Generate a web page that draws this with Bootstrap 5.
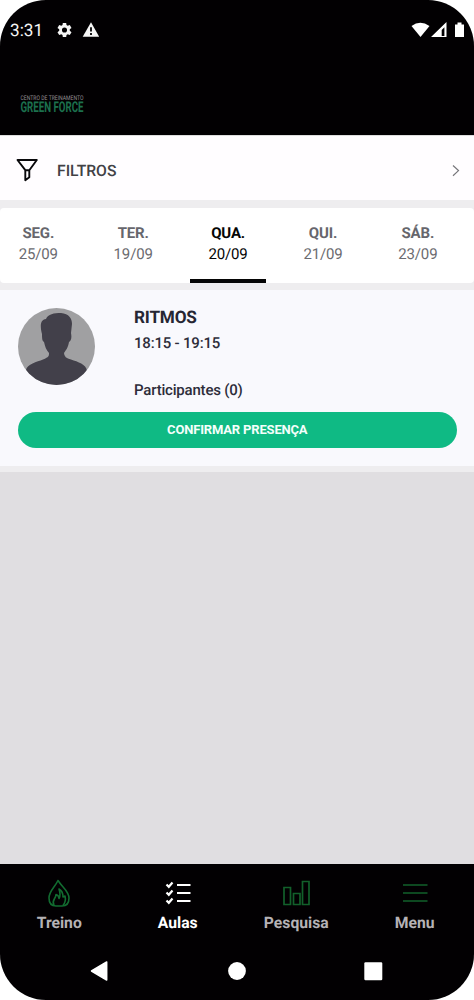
<!DOCTYPE html>
<html lang="pt-BR">
<head>
<meta charset="utf-8">
<meta name="viewport" content="width=device-width, initial-scale=1">
<title>Aulas</title>
<link href="https://cdn.jsdelivr.net/npm/bootstrap@5.3.0/dist/css/bootstrap.min.css" rel="stylesheet">
<style>
body{background:#fff;font-family:Roboto,"Liberation Sans",sans-serif;color:#2d2d3a;overflow:hidden;text-rendering:geometricPrecision}
svg{display:block}
.phone{width:474px;height:1000px;border-radius:46px;background:#e0dee1}
.topbar{height:135px;background:#020002}
.status{height:60px;padding-left:10px;padding-right:9px}
.clock{font-size:17.2px;line-height:20px;width:46px;padding-top:1px;color:#f4f4f4}
.logo{margin:26px 0 0 16px;overflow:visible}
.sheet{background:#eeedef}
.filters{height:65px;padding:5px 14px 0 16px;background:#fffdff;border-top:1px solid #ddd}
.filters span{font-size:15.7px;font-weight:500;color:#414145;margin-left:18px}
.days{height:75px;margin-top:8px;background:#fff;border-radius:4px}
.day{width:76.600px;margin-right:18.300px;padding-top:15px;text-align:center;color:#6b6b70;font-size:15px;letter-spacing:-.15px;line-height:21px;border-bottom:4px solid transparent}
.day b{display:block;font-size:15px;font-weight:700;color:#66666c}
.day.active,.day.active b{color:#050505}
.day.active{border-color:#050505}
.lesson{height:176px;margin-top:7px;padding:18px 17.5px 0 18px;background:#f9f9fd}
.lesson-text{height:100px;margin-left:39px;font-weight:500;font-size:15px;letter-spacing:-.2px;line-height:20px}
.lesson-text h1{font-size:17.2px;line-height:20px;margin:0 0 5px;font-weight:700;color:#262633}
.people{padding-top:27px}
.confirm{height:36px;margin-top:4px;background:#0fba84!important;border:0;border-radius:18px;color:#f5fffb!important;font-weight:700;font-size:13px;letter-spacing:-.17px;line-height:36px;padding:0}
.edge{height:6px}
.bottom{height:136px;background:#020002}
.tabs{height:80px}
.tab{width:118.8px;padding-top:14px;color:#b5b2b5;font-weight:700;font-size:15.7px;line-height:20px;text-decoration:none}
.tab svg{margin-bottom:4px}
.tab.active{color:#fff}
</style>
</head>
<body>
<div class="phone d-flex flex-column overflow-hidden">
  <header class="topbar flex-shrink-0">
    <div class="status d-flex align-items-center">
      <span class="clock">3:31</span>
      <svg width="17" height="18" viewBox="0 0 24 24" fill="#f5f5f5"><path fill-rule="evenodd" d="M19.4 13l.1-1-.1-1 2.5-2-2.4-4.2-3 1.2-1.7-1L14.4 2H9.6l-.4 3-1.7 1-3-1.2L2.100 9l2.500 2-.1 1 .1 1-2.500 2 2.400 4.200 3-1.200 1.700 1 .4 3h4.800l.4-3 1.700-1 3 1.200 2.400-4.200zM12 15.600a3.600 3.600 0 1 1 0-7.200 3.600 3.600 0 0 1 0 7.200z"/></svg>
      <svg class="ms-2" width="20" height="17" viewBox="0 0 20 17"><path fill="#f5f5f5" d="M10 .3 18.200 14.700H1.700z"/><path stroke="#020002" stroke-width="1.800" d="M10 5.300V9.500M10 11v1.900"/></svg>
      <svg class="ms-auto" width="54" height="18" viewBox="0 0 54 18" fill="#fff"><path d="M.5 5Q9.200-1.300 18.500 5L9.500 16z"/><path fill-rule="evenodd" d="M20 16 35.500 1v15zM30.700 9v6h2.700V6.300z"/><path d="M44 3.500h2.500V1.500h4v2H53V16h-9z"/></svg>
    </div>
    <svg class="logo" width="80" height="36" viewBox="-4 -6 80 36" font-family="Roboto, sans-serif">
      <text x=".5" y="7.600" font-size="6.300" textLength="63" lengthAdjust="spacingAndGlyphs" fill="#969096">CENTRO DE TREINAMENTO</text>
      <text x=".5" y="20.300" font-size="14.800" font-weight="700" textLength="63" lengthAdjust="spacingAndGlyphs" fill="#1c704d">GREEN FORCE</text>
    </svg>
  </header>
  <main class="flex-grow-1">
    <div class="sheet">
      <div class="filters d-flex align-items-center">
        <svg width="23" height="24" viewBox="0 0 23 24" fill="none" stroke="#09090b" stroke-width="1.900" stroke-linejoin="round"><path d="M1.500 1h19.300L13.300 11.200v7.100l-4 2.900v-10zM9.300 11.200h4"/></svg>
        <span>FILTROS</span>
        <svg class="ms-auto" width="9" height="14" viewBox="0 0 9 14" fill="none" stroke="#77777b" stroke-width="1.200"><path d="M2 1.500 7.500 6.600 2 11.700"/></svg>
      </div>
      <nav class="days d-flex">
        <div class="day"><b>SEG.</b>25/09</div>
        <div class="day"><b>TER.</b>19/09</div>
        <div class="day active"><b>QUA.</b>20/09</div>
        <div class="day"><b>QUI.</b>21/09</div>
        <div class="day me-0"><b>SÁB.</b>23/09</div>
      </nav>
      <section class="lesson">
        <div class="d-flex">
          <svg width="77" height="77" viewBox="0 0 77 77"><defs><clipPath id="round"><circle cx="38.500" cy="38.500" r="38.500"/></clipPath></defs><g clip-path="url(#round)"><path fill="#a0a0a2" d="M0 0h77v77H0z"/><path fill="#42404a" d="M24 26C22 18 22 12 28 11 30 6 36 5 43 5 51 6 54 10 54 16L53 25C54 30 53 33 51 34 50 40 48 42 46 45Q46 50 53 51.500C60 54 68 56 69 63V80H8V62C9 56 19 54 25 51.500 31 49 31 48 31 45 28 42 27 38 26 34 24 33 24 30 24 26z"/></g></svg>
          <div class="lesson-text">
            <h1>RITMOS</h1>
            <div>18:15 - 19:15</div>
            <div class="people">Participantes (0)</div>
          </div>
        </div>
        <button class="btn confirm w-100 d-block">CONFIRMAR PRESENÇA</button>
      </section>
      <div class="edge"></div>
    </div>
  </main>
  <footer class="bottom flex-shrink-0">
    <nav class="tabs d-flex">
      <a class="tab d-flex flex-column align-items-center"><svg width="26" height="31" viewBox="0 0 26 31" fill="none" stroke="#126b30" stroke-width="1.600" stroke-linejoin="round"><path d="M12 2.500C9 9 3 13 3 20q0 8 7 8h6q7 0 7-8C23 13 16 9 12 2.500z"/><path d="M8 27.500C5 22 10 21 10 16.500q3 1 3 4C15 17 14 14 13 11c4 2 4 6 4 8l2-1c1 4 0 7-2 9.500"/></svg><span>Treino</span></a>
      <a class="tab active d-flex flex-column align-items-center"><svg width="26" height="31" viewBox="0 0 26 31" fill="none" stroke="#fff" stroke-width="2.200"><path d="M12 7h13.500M12 15h13.500M12 23h13.500M1.500 6.500l2.300 2.300L7.500 4.500M1.500 14.500l2.300 2.300L7.500 12.500M1.500 22.500l2.300 2.300L7.500 20.500"/></svg><span>Aulas</span></a>
      <a class="tab d-flex flex-column align-items-center"><svg width="28" height="31" viewBox="0 0 28 31" fill="none" stroke="#12602b" stroke-width="1.700"><path d="M2 9.500h6.500v17H2zM11.500 15.500H18v11h-6.500zM20.500 3.500H27v23h-6.500z"/></svg><span>Pesquisa</span></a>
      <a class="tab d-flex flex-column align-items-center"><svg width="26" height="31" viewBox="0 0 26 31" stroke="#12602b" stroke-width="1.700"><path d="M1 7h24.500M1 15h24.500M1 23h24.500"/></svg><span>Menu</span></a>
    </nav>
    <svg width="474" height="54" viewBox="0 0 474 54" fill="#fff"><path stroke="#fff" stroke-width="1.500" stroke-linejoin="round" d="M91.500 27 106.700 18v18z"/><circle cx="237" cy="27" r="8.900"/><rect x="364.300" y="18.200" width="18" height="18" rx="1.200"/></svg>
  </footer>
</div>
</body>
</html>
